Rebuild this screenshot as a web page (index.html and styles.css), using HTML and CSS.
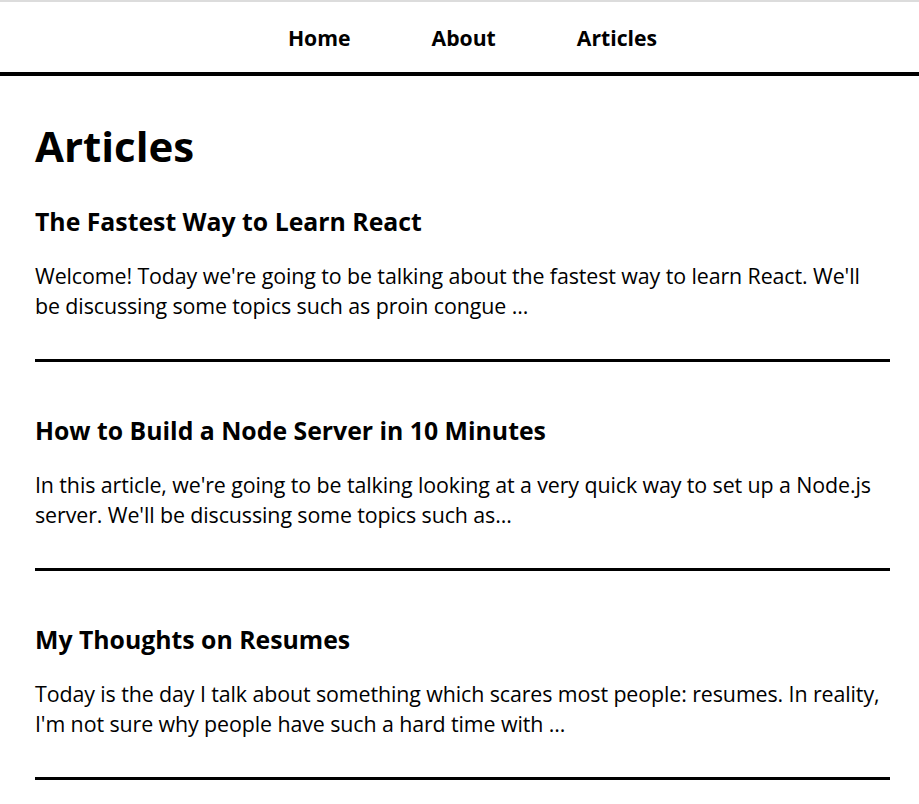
FILE: index.html
```html
<!DOCTYPE html>
<html lang="en">
<head>
<meta charset="utf-8">
<title>Articles</title>
<link rel="stylesheet" href="styles.css">
</head>
<body>
<div class="topstrip"></div>
<nav class="nav">
  <a class="nav-link" href="#">Home</a>
  <a class="nav-link" href="#">About</a>
  <a class="nav-link" href="#">Articles</a>
</nav>
<main class="content">
  <h1 class="page-title">Articles</h1>
  <article class="post">
    <h2 class="post-title">The Fastest Way to Learn React</h2>
    <p class="post-excerpt">Welcome! Today we're going to be talking about the fastest way to learn React. We'll be discussing some topics such as proin congue ...</p>
    <hr class="divider">
  </article>
  <article class="post">
    <h2 class="post-title">How to Build a Node Server in 10 Minutes</h2>
    <p class="post-excerpt">In this article, we're going to be talking looking at a very quick way to set up a Node.js server. We'll be discussing some topics such as...</p>
    <hr class="divider">
  </article>
  <article class="post">
    <h2 class="post-title">My Thoughts on Resumes</h2>
    <p class="post-excerpt">Today is the day I talk about something which scares most people: resumes. In reality, I'm not sure why people have such a hard time with ...</p>
    <hr class="divider">
  </article>
</main>
</body>
</html>
```
FILE: styles.css
```css
html, body {
  margin: 0;
  padding: 0;
  background: #fff;
  color: #000;
  font-family: "Open Sans", "Noto Sans", sans-serif;
}

.topstrip {
  height: 2px;
  background: #dcdcdc;
}

.nav {
  display: flex;
  justify-content: center;
  align-items: center;
  gap: 81px;
  height: 70px;
  padding-left: 26px;
  border-bottom: 4px solid #000;
  box-sizing: content-box;
}

.nav-link {
  font-size: 21.2px;
  font-weight: 700;
  line-height: 26px;
  color: #000;
  text-decoration: none;
  margin-top: 1px;
}

.content {
  padding: 0 29px 0 35px;
}

.page-title {
  margin: 45px 0 0;
  font-size: 42px;
  line-height: 50px;
  font-weight: 700;
}

.post {
  display: flex;
  flex-direction: column;
}

.post-title {
  margin: 34px 0 0;
  font-size: 24.8px;
  line-height: 32px;
  font-weight: 700;
}

.post + .post .post-title {
  margin-top: 52px;
}

.post-excerpt {
  margin: 24px 5px 0 0;
  font-size: 21.4px;
  line-height: 30px;
  letter-spacing: -0.1px;
}

.divider {
  margin: 38px 0 0;
  height: 3px;
  border: 0;
  background: #000;
}
```
